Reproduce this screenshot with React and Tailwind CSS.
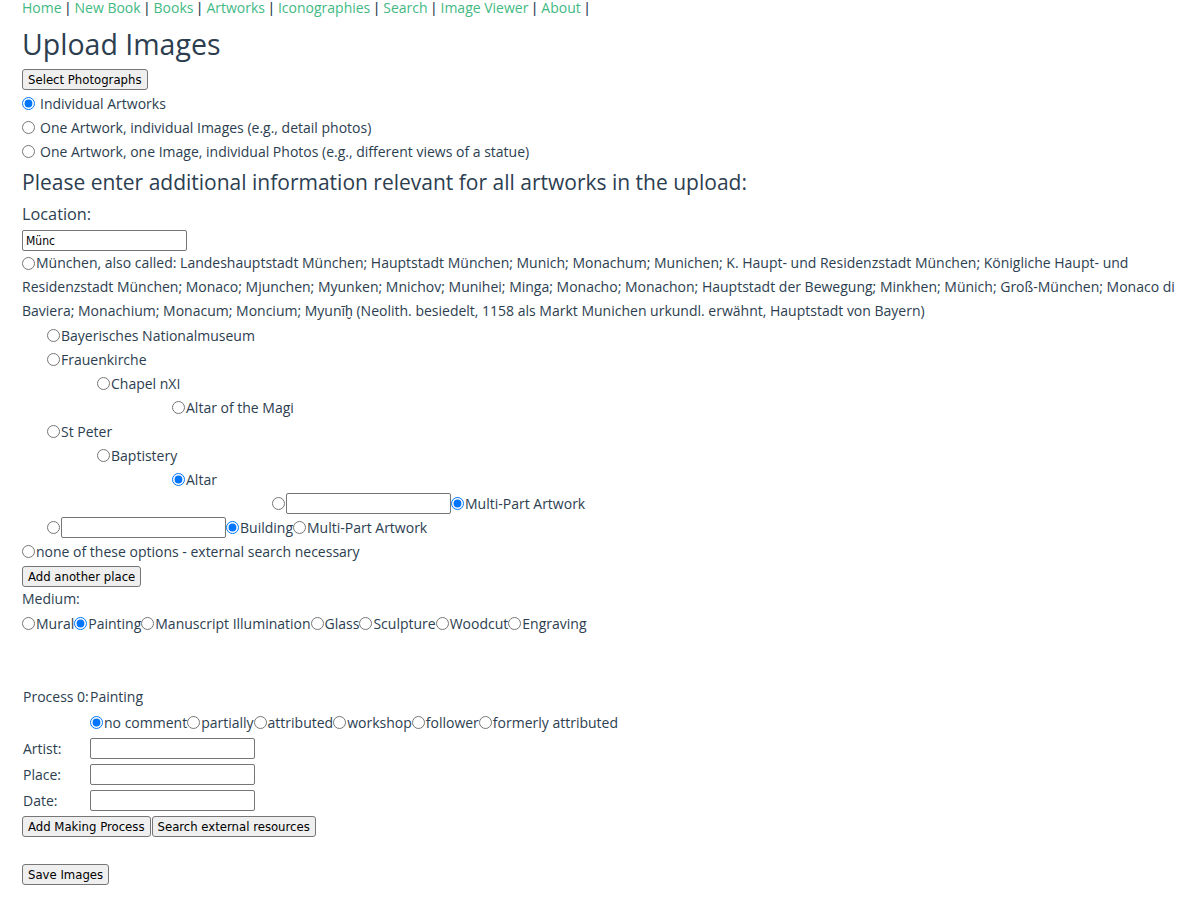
const btn =
  "inline-flex h-[21px] items-center rounded-[3px] border border-[#767676] bg-[#efefef] px-[5px] font-['DejaVu_Sans_Condensed','DejaVu_Sans',sans-serif] font-stretch-condensed text-[13px] leading-none text-black";
const field =
  "h-[21px] w-[165px] shrink-0 rounded-[2px] border border-[#767676] bg-white px-[3px] font-['DejaVu_Sans_Condensed','DejaVu_Sans',sans-serif] text-[12px] text-black";

function Radio({ checked, space = "mr-px", className = "" }) {
  return (
    <input
      type="radio"
      defaultChecked={checked}
      className={"m-0 h-[13px] w-[13px] shrink-0 " + space + " " + className}
    />
  );
}

function Row({ indent, children }) {
  return (
    <div className="flex h-[24px] items-center whitespace-nowrap" style={{ paddingLeft: indent }}>
      {children}
    </div>
  );
}

const navItems = ["Home", "New Book", "Books", "Artworks", "Iconographies", "Search", "Image Viewer", "About"];
const media = ["Mural", "Painting", "Manuscript Illumination", "Glass", "Sculpture", "Woodcut", "Engraving"];
const attributions = ["no comment", "partially", "attributed", "workshop", "follower", "formerly attributed"];

export default function App() {
  return (
    <div className="min-h-[910px] bg-white pl-[22px] font-['Open_Sans',sans-serif] text-[14px] text-[#2c3e50]">
      <nav className="h-[16px] whitespace-nowrap leading-[16px]">
        {navItems.map((item) => (
          <span key={item}>
            <a href="#" className="text-[#42b983]">{item}</a>
            <span className="font-['Liberation_Sans',sans-serif] tracking-[0.5px]"> | </span>
          </span>
        ))}
      </nav>

      <h1 className="mt-[9px] text-[28.5px] leading-[38px]">Upload Images</h1>
      <div className="mt-[6px] flex">
        <button className={btn}>Select Photographs</button>
      </div>

      <div className="mt-px">
        <Row indent={0}><Radio checked space="mr-[5px]" />Individual Artworks</Row>
        <Row indent={0}><Radio space="mr-[5px]" />One Artwork, individual Images (e.g., detail photos)</Row>
        <Row indent={0}><Radio space="mr-[5px]" />One Artwork, one Image, individual Photos (e.g., different views of a statue)</Row>
      </div>

      <h2 className="text-[21px] leading-[38px]">Please enter additional information relevant for all artworks in the upload:</h2>
      <div className="text-[16.3px] leading-[26px]">Location:</div>
      <div className="mt-[3px] flex">
        <input type="text" defaultValue="Münc" className={field} />
      </div>

      <p className="whitespace-nowrap leading-[24px]">
        <Radio className="inline-block align-[-2px]" />München, also called: Landeshauptstadt München; Hauptstadt München; Munich; Monachum; Munichen; K. Haupt- und Residenzstadt München; Königliche Haupt- und
        <br />
        Residenzstadt München; Monaco; Mjunchen; Myunken; Mnichov; Munihei; Minga; Monacho; Monachon; Hauptstadt der Bewegung; Minkhen; Münich; Groß-München; Monaco di
        <br />
        Baviera; Monachium; Monacum; Moncium; Myunīḫ (Neolith. besiedelt, 1158 als Markt Munichen urkundl. erwähnt, Hauptstadt von Bayern)
      </p>

      <Row indent={25}><Radio />Bayerisches Nationalmuseum</Row>
      <Row indent={25}><Radio />Frauenkirche</Row>
      <Row indent={75}><Radio />Chapel nXI</Row>
      <Row indent={150}><Radio />Altar of the Magi</Row>
      <Row indent={25}><Radio />St Peter</Row>
      <Row indent={75}><Radio />Baptistery</Row>
      <Row indent={150}><Radio checked />Altar</Row>
      <Row indent={250}>
        <Radio />
        <input type="text" className={field} />
        <Radio checked />Multi-Part Artwork
      </Row>
      <Row indent={25}>
        <Radio />
        <input type="text" className={field} />
        <Radio checked />Building<Radio />Multi-Part Artwork
      </Row>
      <Row indent={0}><Radio />none of these options - external search necessary</Row>

      <div className="mt-[3px] flex">
        <button className={btn}>Add another place</button>
      </div>
      <div className="h-[24px] leading-[24px]">Medium:</div>
      <Row indent={0}>
        {media.map((m) => (
          <span key={m} className="flex items-center">
            <Radio checked={m === "Painting"} />{m}
          </span>
        ))}
      </Row>

      <div className="mt-[48px] grid grid-cols-[68px_1fr] auto-rows-[26px] items-center whitespace-nowrap">
        <div className="pl-px">Process 0:</div>
        <div>Painting</div>
        <div />
        <div className="flex items-center">
          {attributions.map((a) => (
            <span key={a} className="flex items-center">
              <Radio checked={a === "no comment"} />{a}
            </span>
          ))}
        </div>
        <div className="pl-px">Artist:</div>
        <div className="flex"><input type="text" className={field} /></div>
        <div className="pl-px">Place:</div>
        <div className="flex"><input type="text" className={field} /></div>
        <div className="pl-px">Date:</div>
        <div className="flex"><input type="text" className={field} /></div>
      </div>

      <div className="mt-[3px] flex">
        <button className={btn}>Add Making Process</button>
        <button className={btn + " ml-px"}>Search external resources</button>
      </div>
      <div className="mt-[27px] flex">
        <button className={btn}>Save Images</button>
      </div>
    </div>
  );
}
